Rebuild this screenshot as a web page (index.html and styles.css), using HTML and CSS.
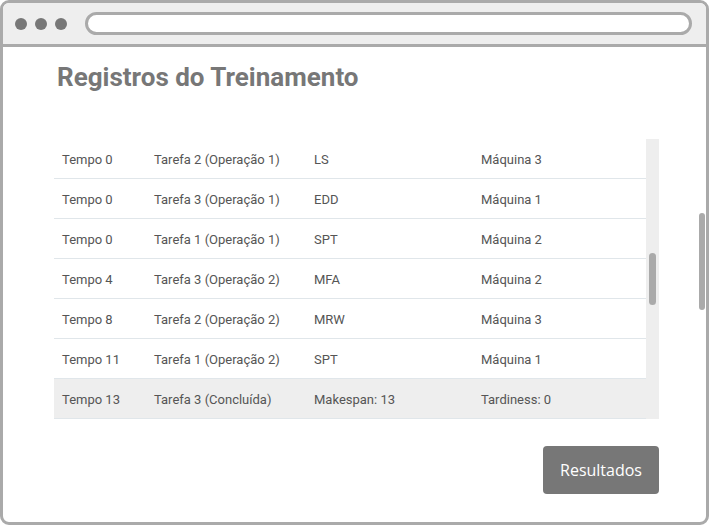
FILE: index.html
```html
<!DOCTYPE html>
<html lang="pt">
<head>
<meta charset="utf-8">
<title>Registros do Treinamento</title>
<link rel="stylesheet" href="styles.css">
</head>
<body>
<div class="frame">
  <div class="titlebar">
    <span class="dot"></span><span class="dot"></span><span class="dot"></span>
    <div class="url"></div>
  </div>
  <div class="content">
    <h1 class="title">Registros do Treinamento</h1>
    <div class="scrollbox">
      <div class="rows">
        <div class="row"><span class="c1">Tempo 0</span><span class="c2">Tarefa 2 (Operação 1)</span><span class="c3">LS</span><span class="c4">Máquina 3</span></div>
        <div class="row"><span class="c1">Tempo 0</span><span class="c2">Tarefa 3 (Operação 1)</span><span class="c3">EDD</span><span class="c4">Máquina 1</span></div>
        <div class="row"><span class="c1">Tempo 0</span><span class="c2">Tarefa 1 (Operação 1)</span><span class="c3">SPT</span><span class="c4">Máquina 2</span></div>
        <div class="row"><span class="c1">Tempo 4</span><span class="c2">Tarefa 3 (Operação 2)</span><span class="c3">MFA</span><span class="c4">Máquina 2</span></div>
        <div class="row"><span class="c1">Tempo 8</span><span class="c2">Tarefa 2 (Operação 2)</span><span class="c3">MRW</span><span class="c4">Máquina 3</span></div>
        <div class="row"><span class="c1">Tempo 11</span><span class="c2">Tarefa 1 (Operação 2)</span><span class="c3">SPT</span><span class="c4">Máquina 1</span></div>
        <div class="row done"><span class="c1">Tempo 13</span><span class="c2">Tarefa 3 (Concluída)</span><span class="c3">Makespan: 13</span><span class="c4">Tardiness: 0</span></div>
      </div>
      <div class="track"><div class="thumb"></div></div>
    </div>
    <div class="actions">
      <button class="btn">Resultados</button>
    </div>
    <div class="pagebar"></div>
  </div>
</div>
</body>
</html>
```

FILE: styles.css
```css
html, body {
  margin: 0;
  padding: 0;
  background: #fff;
}
.frame {
  width: 709px;
  height: 525px;
  box-sizing: border-box;
  border: 3px solid #aaa;
  border-radius: 9px;
  overflow: hidden;
  display: flex;
  flex-direction: column;
  background: #fff;
}
.titlebar {
  height: 41px;
  flex: none;
  background: #eee;
  border-bottom: 3px solid #aaa;
  display: flex;
  align-items: center;
  padding-left: 12px;
}
.dot {
  width: 12px;
  height: 12px;
  border-radius: 50%;
  background: #777;
  margin-right: 8px;
  flex: none;
}
.dot:nth-child(3) {
  margin-right: 18px;
}
.url {
  flex: 1;
  height: 23px;
  box-sizing: border-box;
  border: 3px solid #aaa;
  border-radius: 12px;
  background: #fff;
  margin-right: 14px;
}
.content {
  position: relative;
  flex: 1;
  padding: 15px 47px 0 51px;
  font-family: Roboto, "Liberation Sans", sans-serif;
}
.title {
  margin: 0;
  padding-left: 3px;
  font-size: 26px;
  line-height: 30px;
  font-weight: 700;
  color: #777;
}
.scrollbox {
  margin-top: 47px;
  height: 280px;
  display: flex;
}
.rows {
  flex: 1;
}
.row {
  height: 40px;
  box-sizing: border-box;
  border-bottom: 1px solid #e0e6ea;
  display: flex;
  align-items: center;
  padding-top: 1px;
  font-size: 13px;
  color: #555;
}
.row.done {
  background: #eee;
}
.row span {
  padding-left: 8px;
  box-sizing: border-box;
  white-space: nowrap;
}
.c1 { width: 92px; }
.c2 { width: 160px; }
.c3 { width: 167px; }
.c4 { flex: 1; }
.track {
  width: 13px;
  background: #eee;
  flex: none;
  padding-top: 114px;
  box-sizing: border-box;
}
.thumb {
  width: 7px;
  height: 52px;
  margin-left: 3px;
  border-radius: 4px;
  background: #aaa;
}
.actions {
  display: flex;
  justify-content: flex-end;
  margin-top: 27px;
}
.btn {
  width: 116px;
  height: 48px;
  border: none;
  border-radius: 4px;
  background: #777;
  color: #fff;
  font-family: "Open Sans", Lato, sans-serif;
  font-size: 16px;
  padding: 0;
}
.pagebar {
  position: absolute;
  right: 1px;
  top: 166px;
  width: 6px;
  height: 97px;
  border-radius: 3px;
  background: #aaa;
}
```
